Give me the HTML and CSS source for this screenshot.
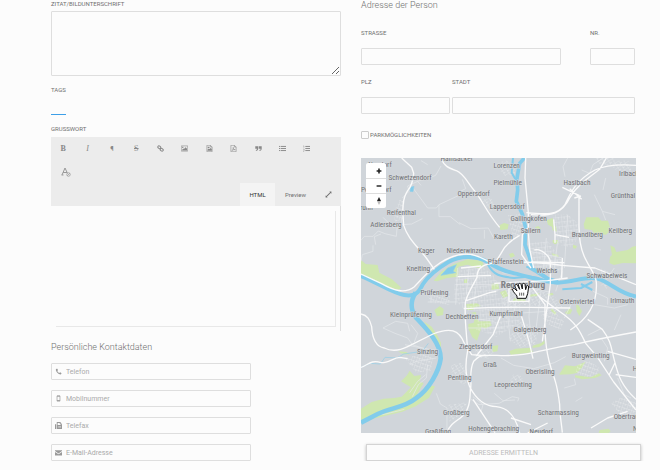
FILE: index.html
```html
<!DOCTYPE html>
<html lang="de">
<head>
<meta charset="utf-8">
<title>Person bearbeiten</title>
<link rel="stylesheet" href="styles.css">
</head>
<body>
<form class="page">
  <div class="col">
    <label class="label first" for="zitat">ZITAT/BILDUNTERSCHRIFT</label>
    <textarea class="quote" id="zitat"></textarea>
    <label class="label tags-label" for="tags">TAGS</label>
    <input class="tags" id="tags">
    <label class="label" for="gruss">GRUSSWORT</label>
    <div class="toolbar">
      <div class="tools">
        <button type="button" class="tool serif" aria-label="Fett"><b>B</b></button>
        <button type="button" class="tool serif" aria-label="Kursiv"><i>I</i></button>
        <button type="button" class="tool" aria-label="Absatz">¶</button>
        <button type="button" class="tool serif" aria-label="Durchgestrichen"><s>S</s></button>
        <button type="button" class="tool" aria-label="Link"><svg viewBox="0 0 12 12"><g fill="none" stroke="currentColor" stroke-width="1.8"><rect x="1.2" y="2" width="5.4" height="4" rx="2" transform="rotate(40 4 4)"/><rect x="5.4" y="6" width="5.4" height="4" rx="2" transform="rotate(40 8 8)"/></g></svg></button>
        <button type="button" class="tool" aria-label="Bild"><svg viewBox="0 0 12 12"><path fill="none" stroke="currentColor" d="M.5 1.500h11v9H.5z"/><path fill="currentColor" d="M2 9.500V8l2-2 1 1 3-3 2.300 2.500v3zM2 3h2v2H2z"/></svg></button>
        <button type="button" class="tool" aria-label="Bilddatei"><svg viewBox="0 0 12 12"><path fill="none" stroke="currentColor" d="M1.500.5h6l3 3v8h-9zM7.500.5v3h3"/><path fill="currentColor" d="M2.500 10V8l2-2 1.500 1 2-2 2 2v3zM3 3h3v2H3z"/></svg></button>
        <button type="button" class="tool" aria-label="PDF"><svg viewBox="0 0 12 12"><path fill="none" stroke="currentColor" d="M1.500.5h6l3 3v8h-9zM7.500.5v3h3M3.500 9.500C6 7 6 5 5.500 4 5 7 7 8 9 8 6.500 7.500 5 8.500 3.500 9.500z"/></svg></button>
        <button type="button" class="tool" aria-label="Zitat"><svg viewBox="0 0 12 12"><path fill="currentColor" d="M.5 2h5v4c0 2.500-1.500 4-4 4V8.500C3 8.500 3.500 8 3.500 6.500h-3zM6.500 2h5v4c0 2.500-1.500 4-4 4V8.500c1.500 0 2-.5 2-2h-3z"/></svg></button>
        <button type="button" class="tool" aria-label="Liste"><svg viewBox="0 0 12 12"><path stroke="currentColor" stroke-width="1.600" d="M0 2.500h2M3 2.500h9M0 6h2M3 6h9M0 9.500h2M3 9.500h9"/></svg></button>
        <button type="button" class="tool" aria-label="Nummerierte Liste"><svg viewBox="0 0 12 12"><path stroke="currentColor" stroke-width="1.600" d="M4 2.500h8M4 6h8M4 9.500h8"/><path fill="none" stroke="currentColor" stroke-width=".8" d="M.5 1.500h1v3M.5 7h1.500v2L.5 11H2"/></svg></button>
        <button type="button" class="tool clear" aria-label="Formatierung entfernen"><svg viewBox="0 0 20 20"><path fill="none" stroke="currentColor" stroke-width="2" d="M2 16 8 2l6 13M4 11h8M1 16h4"/><circle cx="15" cy="15" r="3.500" fill="#ececec" stroke="currentColor" stroke-width="1.500"/><path stroke="currentColor" stroke-width="1.500" d="m12.500 17.500 5-5"/></svg></button>
      </div>
      <div class="tabs">
        <button type="button" class="tab active">HTML</button>
        <button type="button" class="tab">Preview</button>
        <button type="button" class="tab expand" aria-label="Vergrößern"><svg viewBox="0 0 12 12"><path fill="currentColor" d="M7.500 1H11v3.500L9.800 3.300 3.300 9.800 4.500 11H1V7.500l1.200 1.200 6.500-6.500z"/></svg></button>
      </div>
    </div>
    <div class="editor"><textarea id="gruss"></textarea></div>
    <h2 class="heading contact">Persönliche Kontaktdaten</h2>
    <div class="contacts">
      <label class="contact-field"><svg viewBox="0 0 12 12"><path fill="currentColor" d="M3.500 1 1.500 2C1 6 6 11 10 11l1.300-2-2.500-1.800L7.300 8.500C5.500 7.500 4.500 6.500 4 5l1.200-1.500z"/></svg><input type="tel" placeholder="Telefon"></label>
      <label class="contact-field"><svg viewBox="0 0 12 12"><path fill="none" stroke="currentColor" stroke-width="1.200" d="M3.500 1.500h5v9h-5z"/><path stroke="currentColor" stroke-width="1.500" d="M3.500 2h5M3.500 9.500h5"/></svg><input type="tel" placeholder="Mobilnummer"></label>
      <label class="contact-field"><svg viewBox="0 0 12 12"><path fill="currentColor" d="M0 4h2v8H0zM3 0h6l2 2v2h1v8H3zM4.500 1.500V5h5V3H8V1.500zM5 7v1h1V7zm2 0v1h1V7zm2 0v1h1V7zM5 9v1h1V9zm2 0v1h1V9zm2 0v1h1V9z" fill-rule="evenodd"/></svg><input type="tel" placeholder="Telefax"></label>
      <label class="contact-field"><svg viewBox="0 0 12 12"><path fill="currentColor" d="M0 2h12v1.500L6 7.500l-6-4zM0 5l6 4 6-4v6H0z"/></svg><input type="email" placeholder="E-Mail-Adresse"></label>
    </div>
  </div>

  <div class="col">
    <h2 class="heading">Adresse der Person</h2>
    <div class="fields">
      <div class="row street">
        <div class="field"><label class="label" for="str">STRASSE</label><input id="str"></div>
        <div class="field"><label class="label" for="nr">NR.</label><input id="nr"></div>
      </div>
      <div class="row city">
        <div class="field"><label class="label" for="plz">PLZ</label><input id="plz"></div>
        <div class="field"><label class="label" for="stadt">STADT</label><input id="stadt"></div>
      </div>
      <label class="check"><input type="checkbox"><span>PARKMÖGLICHKEITEN</span></label>
    </div>
    <div class="map">
      <svg class="map-art" viewBox="0 0 825 825">
        <defs>
          <pattern id="s1" width="15" height="12" patternUnits="userSpaceOnUse" patternTransform="rotate(18)"><path d="M0 0h15M0 0v12M8 0v6"/></pattern>
          <pattern id="s2" width="13" height="16" patternUnits="userSpaceOnUse" patternTransform="rotate(-32)"><path d="M0 0h13M0 0v16M0 9h7"/></pattern>
          <pattern id="s3" width="17" height="14" patternUnits="userSpaceOnUse" patternTransform="rotate(-6)"><path d="M0 0h17M0 0v14M9 0v8"/></pattern>
        </defs>
        <rect width="825" height="825" fill="#d0d5da"/>
        <g class="green">
          <path d="M0 306l14 12 36 3 5 23 38 20 28 25-8 6-36-8-30-15-47-20z"/>
          <path d="M218 368l24-28 36-22 42-14 44 4 6 18-20 4-30-10-28 6v30l-34 4-30 10z"/>
          <path d="M415 202l14-7 14 4-3 15-22 2zM557 186l18-6 4 30-18-10zM573 207l12-2 2 16-12-4zM522 208l10-4 8 8-10 4zM676 178l36 0 9 10 20 0 8 28-14 14-36-4-6-10-22-3-3-14zM748 262l12 6 6 14 34-6 14-10 11-2v52l-40-1-26 6-14-6 2-18 6-6zM575 246l15 0 3 8-11 5-7-5zM572 286l18 4 4 7-18-3zM636 260l12 4-4 8-8-2zM444 288l12-4 6 10-13 6z"/>
          <path d="M391 378l20-4 4 18-23 4zM417 402l18-6 6 18-14 6zM460 421l34 4v5h-40zM506 410l30-5-8 9-22 2zM568 456l6-4 12 12-4 7zM612 464l14-14 8 6-6 12-12 1zM645 440l8 2 10 18-8 14-8-14zM309 365l10-2v12h-10zM220 456l16-11 12 8-2 18-18 4zM316 438l32-2 12 8-20 4-4 8-18 0zM322 498l16-4 6-24-14-6 14-2 10 28 34 0 4 12-18 10-12-4-14 40-14-10-12-26z"/>
          <path d="M394 564l18-2-3 18-14 2zM444 580l20-8 46-3 6 14-40 4-26 4zM515 563l26-8 9-8 1 10-16 10-20 3zM188 490l24 16 16 24 12 24 0 18-16-34-20-24zM112 580l24 2 10 8-26-4z"/>
          <path d="M0 752l32-20 36-10 32-2 22-4 28-28-30-18 18-18 8-14 14 16 20-3-4 20 12 4-22 38 34-32 22 4-18 34-40 26-40 16-50 12-74 18zM594 650l18-28 30 3 32-14-12 20-14 14-20 4zM642 652l20 2 26 4 26-12 8 6-20 8-38 4-22-6zM716 816l27-4 6 8-6 5h-30zM560 408l14-4 4 6-16 4z"/>
        </g>
        <g class="blocks">
          <path fill="url(#s3)" d="M575 170l44-2 34 30-6 50-20 20-42-10zM500 255l60-6 30 40 20 30-8 20-92-12zM285 340l80-12 30 20 20 36-16 70-84 6-38-40zM360 420l80-4 40 30-4 50-70 40-60-20z"/>
          <path fill="url(#s1)" d="M440 172l36-4 20 60-40 10zM130 600l60-14 26 10-6 42-44 6zM650 620l30-14 36 24-8 24-34 4-30-14zM115 125l16 4-6 56-24 6-2-30zM750 735l36-20 40 20v50l-40-4zM186 400l80 0 0 40-50-4zM540 470l40-10 30 32-14 24-40-20z"/>
          <path fill="url(#s2)" d="M420 378l60 0 60 18 40 18 24 34-22 24-36-26-60-4-60 10zM474 490l60 20-10 50-50 10-30-30zM340 560l60 20-18 22-40-4zM270 620l30-6 22 30-10 40-40-30zM262 740l60-8-26 40-30 20zM400 20l36-14 26 14v30l-30 4zM744 8l60 0 10 40-50-10zM360 125l30-6 20 36-24 4zM456 650l24 0 10 26-34 20-12-20zM720 330l24 12-6 50-20-10zM700 0l60 0-10 22-40-4z"/>
        </g>
        <g class="minor">
          <path d="M0 247l10-12h26l16-16 20 8 34 8 2-24 12-10M0 310l4-20 32-10 0-18M60 228l-20 8 4 24M66 178l30 30 24-4 4-40M122 200l30-2 20-10 12-6M124 120l20-20-4-16 34-16 20-4M156 90l44 60 26 0 8-10 60-28M234 140l0 36 34 0 30 24M294 194l36 18 52-2 16 30M370 216l0 26M290 104l24-12-10-28M240 24l-16 28-20 8M200 20l-20-12M170 70l10 12M270 0l-30 8M620 0l-14 26 6 30M662 36l24 10 10-26 30-20M700 110l24 50 10 26M724 160l38 10M734 60l-8 36M760 330l-14 20 6 14M700 270l20 6"/>
          <path d="M66 510l36 16 38 14 14 20 36 12M66 510l38-20 36 6 6 24M150 500l20 26-10 26M132 560l50 10 50 8M146 620l20-10 60-10M154 716l18-36 24-20 4-40M146 704l24-34 24-20M226 706l12 32 20 12v80M60 770l14-2 56-14M330 724l24 16 60-4 40-20 20 4-4 10M336 716l30 24-6 22M400 706l26 22 36-2M470 676l36 0M420 600l38 22 60 10 62-18 34-18M540 642l20-8M610 690l34-10-4-18M720 540l20 30-10 40M770 660l20 50 20 10M644 730l20-12M720 512l-40 20M700 440l60 10 40-10M696 400l44 20 0 20M780 470l-20 46"/>
          <path d="M424 344l90 14 64 20M394 400l50-12 60 0 60 14M400 470l160-10M444 380l-4 90 8 80M474 380l-16 90M508 386l-4 90 8 80M540 400l-16 120M290 330l-6 110M324 330l-8 80M352 330l-14 110M284 380l120 0M200 432l90 0M210 400l0 34M556 240l-8 90M590 250l-10 80M620 170l-10 160M505 280l100 20M604 340l-20 60M640 420l-30 60M330 480l70 10M320 510l110 0"/>
        </g>
        <g class="streams"><path d="M0 628l28-12 30 2 14-20 36 2 20-12 56-8 18-24"/><path class="lake" d="M149 88l10-3-3 16-9-1zM240 352l20-22 26-10-10 20 8 4-22 4z"/></g>
        <g class="river">
          <path d="M0 354C50 374 92 404 130 411S176 396 186 378C204 350 232 330 262 312C300 290 350 294 380 312C410 332 432 340 460 346C500 354 540 372 590 374C640 372 680 352 710 362C750 374 770 404 825 416" stroke-width="12"/>
          <path d="M164 404C148 428 148 456 166 480C196 512 240 556 239 602C234 640 204 694 166 720C130 750 90 748 50 768L0 794" stroke-width="14"/>
          <path d="M490 0 476 16 468 60 470 96 466 130 484 168 494 210 492 260 506 300 514 330" stroke-width="11"/>
          <path d="M380 318 C396 352 420 356 460 360 C500 356 520 350 560 372M496 326 524 336 548 356M604 394l56-4 34-18M660 378l34 18M456 0l-4 44 14 24" stroke-width="6"/>
          <path d="M505 328 530 342 560 362 590 372" stroke-width="12"/>
        </g>
        <g class="roads">
          <path d="M122 0l30 28 6 18c-2 26-8 40-18 52-20 30-14 70-12 104 12 38 38 60 68 98l24 34M240 0c10 26 24 30 46 38 22 8 34 36 54 60 22 26 40 70 76 110M494 0l-2 60 10 104 0 60 4 50 12 56M496 164c60 6 94 8 116-24 14-30 30-72 90-104 30-14 70-18 123-14M510 170c60 6 94-4 116-50 20-36 50-56 90-86l20-34M604 88l50 24 0 92c0 40 4 70 20 100 14 30 30 44 32 70 4 70-30 112-78 142M626 92l36 32M476 232c-26 14-46 34-56 54-12 22-20 30-36 32"/>
          <path d="M0 468c20 4 26 16 32 38 2 40 16 60 38 64 20 10 46 8 70-4l76-38c50-20 78-14 94 28l22 34c20 4 46 2 76 2 90 6 150-22 230-32 60-14 120-26 187-38M0 628c20-6 30-24 60-14 20 2 36-14 56-16l24 4"/>
          <path d="M0 348l60 28c36 20 70 34 100 10 20-20 34-38 56-56 30-24 60-42 100-42 30 0 50 14 66 22 60 2 150 0 220 12l100 8 123 50M384 318c-24 4-36 16-36 40-10 20-24 40-34 70-6 40 4 110 6 150-8 40-6 80 6 108 20 40 50 60 80 60 40 4 60 34 70 80M328 700c6-26-6-60 10-90 14-14 20-18 34-18M328 690c0 40-4 70-30 90-20 14-34 24-40 44M336 724l66 100M316 428l70-24 20-4M308 452l90-4 110 0 120 2M420 470l-24 60-50 64M400 376l160-8 60-8"/>
          <path d="M500 210l-16 20-2 60 28 40M520 276c20-6 50 20 48 40l0 64-10 70-14 100M604 300l-2 60M510 312l100 2M530 412l68 50c50 34 60 60 76 94l34 40 50 76 67 84M508 380l44 60c0 60-4 120 18 190 14 40 20 60 26 110 0 30 6 60 8 84M480 470l24 80 12 52M680 484l44 30c30 40 26 60 38 100 10 40 20 70 63 110M762 614l-18 38M740 580l85 24M500 825l60-30M690 810l50-30 60-20M764 650l61 8M450 780l60 20"/>
          <path d="M578 184l4 46 42 8M582 230v24M640 120l20-6M300 330l60-6M290 356l100-4M444 430h60v-40h-60z"/>
        </g>
        <g class="names">
          <text x="57" y="28">Neudorf</text><text x="147" y="65">Schwetzendorf</text><text x="46" y="103">Pettendorf</text><text x="10" y="155">Brunn</text>
          <text x="287" y="8">Hainsacker</text><text x="437" y="30">Lorenzen</text><text x="440" y="80">Pielmühle</text><text x="338" y="115">Oppersdorf</text><text x="439" y="153">Lappersdorf</text>
          <text x="503" y="188">Gallingkofen</text><text x="509" y="224">Sallern</text><text x="427" y="242">Kareth</text><text x="648" y="82">Haslbach</text><text x="804" y="55">Irlbach</text><text x="786" y="119">Grünthal</text>
          <text x="778" y="224">Keilberg</text><text x="679" y="238">Brandlberg</text><text x="121" y="171">Reifenthal</text><text x="75" y="208">Adlersberg</text><text x="196" y="286">Kager</text><text x="313" y="285">Niederwinzer</text>
          <text x="172" y="340">Kneiting</text><text x="434" y="319">Pfaffenstein</text><text x="558" y="346">Weichs</text><text x="738" y="359">Schwabelweis</text><text x="220" y="412">Prüfening</text><text x="150" y="477">Kleinprüfening</text>
          <text x="303" y="482">Dechbetten</text><text x="435" y="475">Kumpfmühl</text><text x="648" y="437">Ostenviertel</text><text x="784" y="434">Irlmauth</text><text x="507" y="522">Galgenberg</text><text x="200" y="589">Sinzing</text>
          <text x="344" y="573">Ziegetsdorf</text><text x="689" y="601">Burgweinting</text><text x="387" y="626">Graß</text><text x="296" y="665">Pentling</text><text x="537" y="649">Oberisling</text><text x="456" y="686">Leoprechting</text>
          <text x="286" y="771">Großberg</text><text x="592" y="771">Scharmassing</text><text x="817" y="782">Obertraubling</text><text x="398" y="819">Hohengebraching</text><text x="231" y="829">Graßlfing</text><text x="541" y="829">Neudorf</text><text x="822" y="638">H</text><text x="823" y="819">N</text>
          <text class="capital" x="486" y="390">Regensburg</text>
        </g>
        <path class="hand" d="M468 421v-7c-4-6-10-10-13-18-2-4 4-6 7-3l6 6c-2-7-7-13-6-17 2-4 6-3 8 1l6 11-4-14c0-5 6-5 8-1l4 14v-14c1-4 7-4 8 0l2 16 3-10c2-4 6-3 6 2l-3 20-5 14z"/>
        <path class="fingers" d="M476 404v9M482 404v9M488 404v9"/>
      </svg>
      <div class="zoom">
        <button type="button" aria-label="Vergrößern"><svg viewBox="0 0 10 10"><path stroke="#222" stroke-width="2.600" d="M5 1v8M1 5h8"/></svg></button>
        <button type="button" aria-label="Verkleinern"><svg viewBox="0 0 10 10"><path stroke="#222" stroke-width="2.400" d="M1 5h8"/></svg></button>
        <button type="button" aria-label="Nach Norden"><svg viewBox="0 0 10 10"><path fill="#222" d="m5 0 2.500 5h-5z"/><path fill="#bbb" d="m5 10 2.500-5h-5z"/></svg></button>
      </div>
    </div>
    <button type="button" class="submit">ADRESSE ERMITTELN</button>
  </div>
</form>
</body>
</html>
```
FILE: styles.css
```css
* { box-sizing: border-box; }
body {
  margin: 0;
  background: #fcfcfc;
  color: #707070;
  font-family: Roboto, "Liberation Sans", sans-serif;
  font-size: 6px;
  line-height: 8px;
}
button, input, textarea {
  font: inherit;
  color: inherit;
  margin: 0;
  padding: 0;
  border: 0;
  border-radius: 0;
  background: transparent;
}
.page {
  display: grid;
  grid-template-columns: 290fr 280fr;
  gap: 20px;
  padding: 0 19px 0 51px;
}
.col { min-width: 0; }
.label { display: block; height: 8px; }
.first { margin-bottom: 3px; }
.quote {
  display: block;
  width: 100%;
  height: 65px;
  border: 1px solid #dedede;
  border-radius: 1px;
}
.tags-label { margin-top: 10px; }
.tags {
  display: block;
  width: 15px;
  height: 21px;
  margin-bottom: 10px;
  border-bottom: 1px solid #3d9fe8;
}
.toolbar { margin-top: 4px; background: #ececec; }
.tools {
  display: grid;
  grid-template-columns: repeat(11, 1fr);
  padding-right: 22px;
}
.tool {
  display: flex;
  align-items: center;
  justify-content: center;
  height: 23px;
  color: #888;
  font-size: 7px;
}
.tool svg { width: 7px; height: 7px; }
.tool.serif { font-family: "Liberation Serif", serif; font-size: 8px; }
.tool.clear { justify-content: flex-end; padding-right: 4px; color: #999; }
.tool.clear svg { width: 10px; height: 10px; }
.tabs { display: flex; justify-content: flex-end; }
.tab {
  display: flex;
  align-items: center;
  justify-content: center;
  width: 41px;
  height: 23px;
}
.tab.active { width: 35px; background: #f4f4f4; color: #333; }
.tab.expand { width: 25px; }
.tab svg { width: 7px; height: 7px; }
.editor {
  padding: 5px 4px 4px 5px;
  border-right: 1px solid #dedede;
}
.editor textarea {
  display: block;
  width: 100%;
  height: 116px;
  border-right: 1px solid #e8e8e8;
  border-bottom: 1px solid #e8e8e8;
  resize: none;
}
.heading {
  margin: 0;
  font-size: 9px;
  font-weight: 300;
  line-height: 11px;
}
.contact { margin: 11px 0 10px; }
.contacts {
  display: flex;
  flex-direction: column;
  gap: 10px;
  width: 69%;
}
.contact-field {
  display: flex;
  align-items: center;
  gap: 4px;
  height: 17px;
  padding-left: 3px;
  border: 1px solid #dedede;
  border-radius: 1px;
  color: #999;
}
.contact-field svg { width: 7px; height: 7px; }
.contact-field input { flex: 1; font-size: 7px; }
::placeholder { color: #aaa; opacity: 1; }
.fields { margin: 18px 6px 0 0; }
.row { display: grid; margin-bottom: 15px; }
.street { grid-template-columns: 200fr 45fr; gap: 29px; }
.city { grid-template-columns: 89fr 183fr; gap: 2px; }
.field input {
  display: block;
  width: 100%;
  height: 17px;
  margin-top: 11px;
  border: 1px solid #dedede;
  border-radius: 1px;
}
.row + .row { margin-top: -2px; }
.check {
  display: flex;
  align-items: center;
  gap: 1px;
  margin-top: 17px;
}
.check input {
  appearance: none;
  width: 8px;
  height: 8px;
  border: 1px solid #ccc;
  border-radius: 1px;
}
.map { position: relative; margin: 19px 5px 0 0; }
.map-art { display: block; width: 100%; }
.map-art pattern path { fill: none; stroke: #f6f7f8; stroke-width: 2; }
.green { fill: #cfe7b0; }
.minor, .roads, .streams, .river { fill: none; stroke-linejoin: round; }
.blocks { opacity: 0.6; }
.minor { stroke: #e6e9eb; stroke-width: 2; }
.roads { stroke: #fafafa; stroke-width: 4; }
.streams { stroke: #92cfe9; stroke-width: 2; }
.lake { fill: #82cceb; }
.river { stroke: #82cceb; }
.names {
  fill: #707276;
  font-family: "Liberation Sans Narrow", "Roboto Condensed", Roboto, sans-serif;
  font-size: 22px;
  text-anchor: middle;
  stroke: #d8dbde;
  stroke-width: 3px;
  paint-order: stroke;
}
.capital { font-size: 28px; font-weight: 700; fill: #808286; }
.hand { fill: #fff; stroke: #111; stroke-width: 3; }
.fingers { stroke: #111; stroke-width: 2; }
.zoom {
  position: absolute;
  top: 5px;
  left: 5px;
  width: 20px;
  background: #fff;
  border-radius: 2px;
}
.zoom button {
  display: flex;
  align-items: center;
  justify-content: center;
  width: 100%;
  height: 15px;
  padding-left: 5px;
}
.zoom button + button { border-top: 1px solid #ddd; }
.zoom svg { width: 6px; height: 6px; }
.zoom button:last-child svg { width: 8px; height: 8px; }
.submit {
  display: block;
  width: calc(100% - 5px);
  height: 17px;
  margin: 11px 0 0 5px;
  border: 1px solid #d4d4d4;
  box-shadow: 0 1px 3px rgba(0, 0, 0, 0.25);
  color: #bbb;
  font-size: 7px;
}
```
